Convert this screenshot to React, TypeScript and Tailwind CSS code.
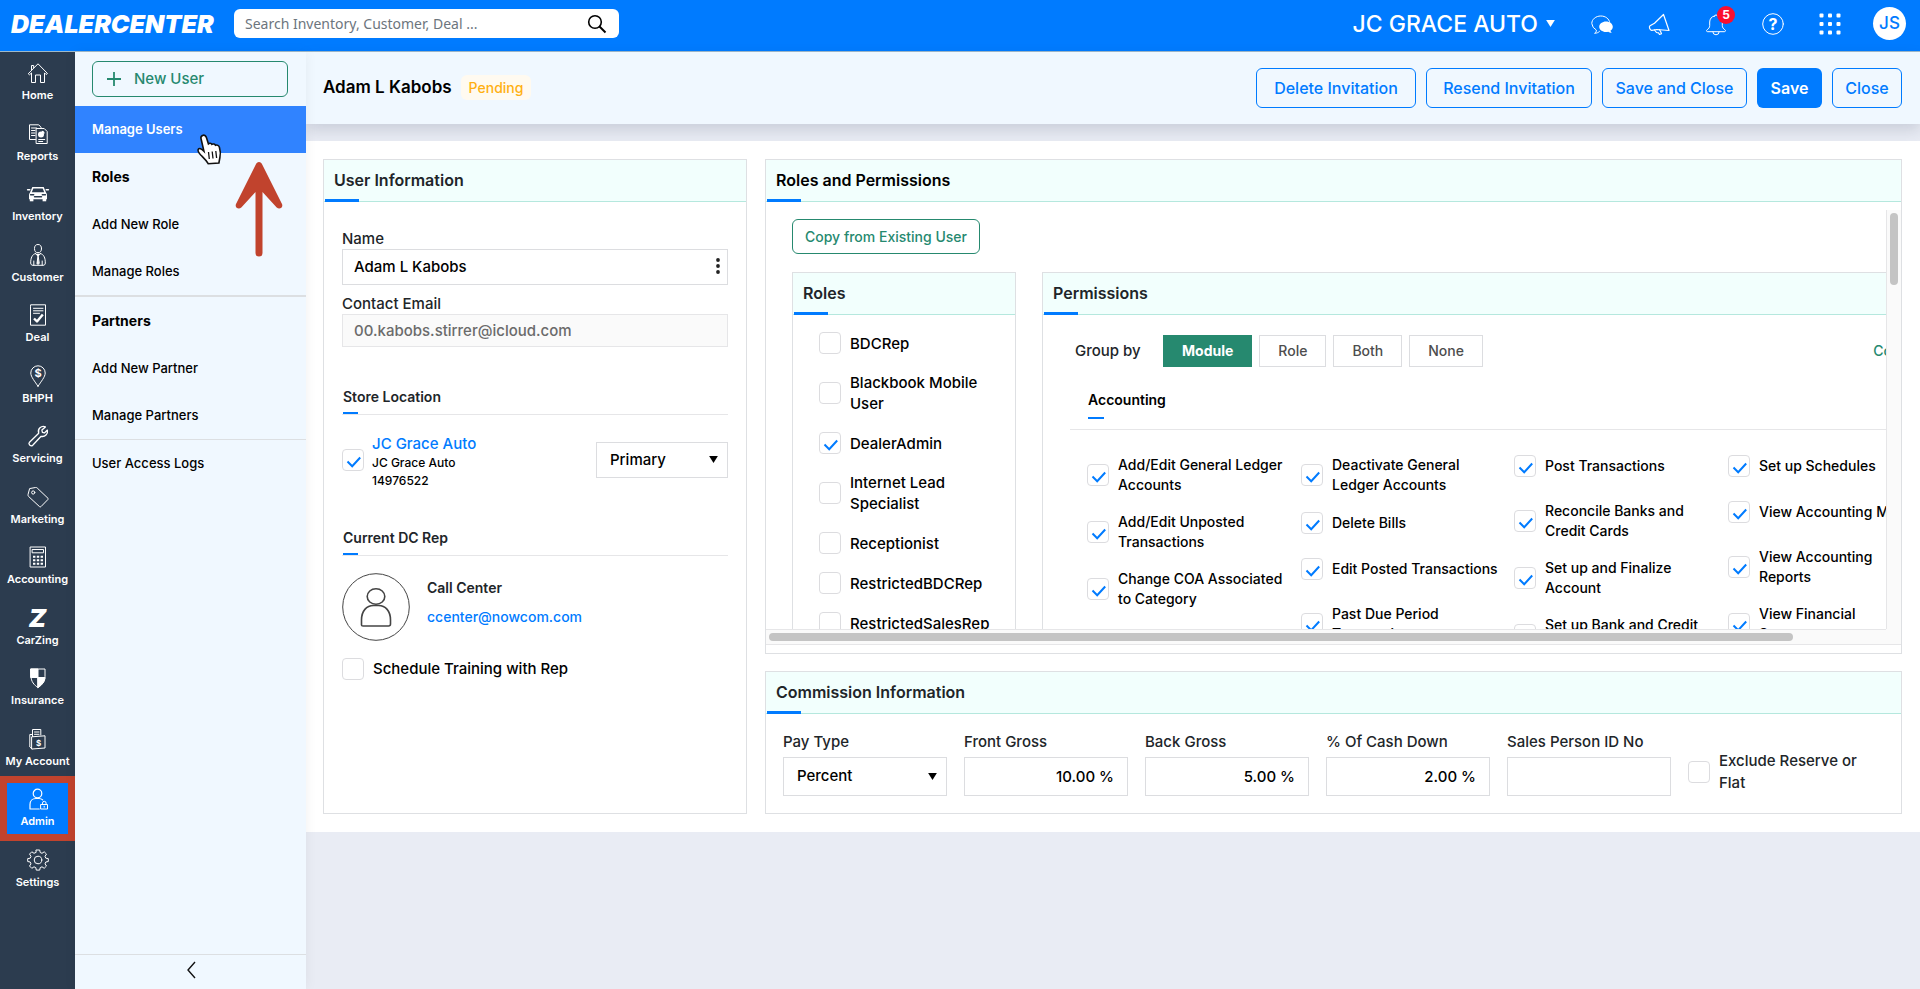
import { useId, useState } from 'react';
import type { ReactNode } from 'react';
import clsx from 'clsx';

// ---------- Icons ----------

function Icon({ children, size = 'h-[22px] w-[22px]' }: { children: ReactNode; size?: string }) {
  return (
    <svg
      viewBox="0 0 22 22"
      className={clsx(size, 'shrink-0 overflow-visible')}
      fill="none"
      stroke="currentColor"
      strokeWidth="1"
      strokeLinecap="round"
      strokeLinejoin="round"
      aria-hidden="true"
    >
      {children}
    </svg>
  );
}

const HomeIcon = () => (
  <Icon>
    <path d="M1.5 11.5 11 1.8l9.500 9.700-1.400 1-1.600-1.600V20.500h-4v-7.500h-5v7.500h-4V10.900l-1.600 1.600z" />
    <path d="M4.500 8V3.500h2.200v2.300" />
  </Icon>
);

const ReportsIcon = () => (
  <Icon>
    <path d="M8.500 16.500H2.500V1.800h9.200l2.300 2.400v.6" />
    <path d="M4.500 5h5M4.500 7.500h3.500M4.500 10h3.500M4.500 12.500h3.500" />
    <path d="M9.500 5.500h7.700l3 3V20.500H9.500z" />
    <circle cx="14" cy="11.500" r="3" fill="currentColor" stroke="none" />
    <path d="M14.800 7.700a3 3 0 0 1 2.900 2.900h-2.900z" fill="currentColor" stroke="none" />
    <path d="M11.700 16.500h6M11.700 18.500h4" />
  </Icon>
);

const InventoryIcon = () => (
  <Icon>
    <path d="M5.300 4h11.400l2.300 5.500 1 1.700v5H2v-5l1-1.700z" fill="currentColor" stroke="none" />
    <path d="M6.300 5.400h9.400l1.500 3.800H4.800z" fill="#2c3c4f" stroke="none" />
    <path d="M.6 6.800h2.200M19.200 6.800h2.200" strokeWidth="1.500" />
    <rect x="2.800" y="15.500" width="3.600" height="2.800" fill="currentColor" stroke="none" />
    <rect x="15.600" y="15.500" width="3.600" height="2.800" fill="currentColor" stroke="none" />
    <path d="M3.500 11.800h3.200M15.300 11.800h3.200M7.500 13.700h7" stroke="#2c3c4f" strokeWidth="1.400" />
  </Icon>
);

const CustomerIcon = () => (
  <Icon>
    <ellipse cx="11" cy="4.600" rx="3.500" ry="4.100" />
    <path d="M8.500 9.500C5 10.500 3.700 14 3.700 19c0 1.500.8 2.300 2.300 2.300h10c1.500 0 2.300-.8 2.300-2.300 0-5-1.300-8.500-4.800-9.500" />
    <path d="M8.500 9.800 11 12l2.500-2.200M11 12l-1 7.500 1 1 1-1z" fill="currentColor" />
    <path d="M6.800 17v4M15.200 17v4" />
  </Icon>
);

const DealIcon = () => (
  <Icon>
    <path d="M4 .8h14.500v20.400h-15V3.200z" />
    <path d="M6.500 4.300h9.500M6.500 6.800h9.500M6.500 9.300h6" />
    <path d="m7 14.500 3 3 5.800-7" strokeWidth="2.400" strokeLinecap="butt" />
  </Icon>
);

const BhphIcon = () => (
  <Icon>
    <path d="M11 21.300C8 16.500 3.800 12 3.800 8a7.200 7.200 0 0 1 14.400 0c0 4-4.200 8.500-7.200 13.300z" />
    <text x="11" y="12" textAnchor="middle" fontSize="11" fontWeight="700" fontFamily="Inter, sans-serif" fill="currentColor" stroke="none">$</text>
  </Icon>
);

const ServicingIcon = () => (
  <Icon>
    <path
      strokeWidth="1.300"
      d="M18.400 1.900a5 5 0 0 0-6.700 6.300l-9.200 9a2 2 0 0 0 0 2.600l.5.500a2 2 0 0 0 2.700-.1l8.400-8.900a5.200 5.200 0 0 0 6.300-6.200l-3 2.800-2-.6-.5-2.200z"
    />
  </Icon>
);

const MarketingIcon = () => (
  <Icon>
    <path d="M3 2.500 8.500 1.500a2 2 0 0 1 1.700.5L21 12.300a.8.800 0 0 1 0 1.100L14 20.600a1.100 1.100 0 0 1-1.500 0L1.500 10.400A2 2 0 0 1 1 8.800z" />
    <circle cx="6.200" cy="6.500" r="1.600" />
  </Icon>
);

const AccountingIcon = () => (
  <Icon>
    <path d="M3.500 1h15v20h-15z" />
    <path d="M5.500 3.500h11v3.300h-11z" />
    <path d="M6 9.800h2.400v2H6zM9.800 9.800h2.400v2H9.800zM13.600 9.800H16v2h-2.400zM6 13.300h2.400v2H6zM9.800 13.300h2.400v2H9.800zM13.600 13.300H16v2h-2.400zM6 16.800h2.400v2H6zM9.800 16.800h2.400v2H9.800zM13.600 16.800H16v2h-2.400z" fill="currentColor" stroke="none" />
  </Icon>
);

const CarZingIcon = () => (
  <Icon>
    <text x="10.500" y="20" textAnchor="middle" fontSize="25" fontWeight="900" fontStyle="italic" fontFamily="Inter, sans-serif" fill="currentColor" stroke="none">Z</text>
  </Icon>
);

const InsuranceIcon = () => (
  <Icon>
    <path d="M4 2h14v7.500c0 5-3.200 8.700-7 11-3.800-2.300-7-6-7-11z" />
    <path d="M4 2h7v8.500H4zM11 10.500h7c-.3 4.500-3.500 7.800-7 10z" fill="currentColor" />
  </Icon>
);

const MyAccountIcon = () => (
  <Icon>
    <path d="M5.500 8.500V1.500h8.300v5.500M7.500 4h4.500M7.500 6.300h4.500" />
    <path d="M5 21 18 20V7.800L5 8.800z M5 21l-2.200-2V6.500H5" />
    <text x="11.600" y="17.600" textAnchor="middle" fontSize="8" fontWeight="700" fontFamily="Inter, sans-serif" fill="currentColor" stroke="none">$</text>
  </Icon>
);

const AdminIcon = () => (
  <Icon>
    <circle cx="10.500" cy="5.500" r="4.300" strokeWidth="1.200" />
    <path d="M12.200 21H3V16.500c0-3.500 2.500-6 6-6h3c1.500 0 2.700.5 3.700 1.400" strokeWidth="1.200" />
    <path d="M14 16.500h6.500V21H14zM15.500 16.300v-1.200a1.800 1.800 0 0 1 3.600 0v1.200M17.200 18.200v1" />
  </Icon>
);

const SettingsIcon = () => (
  <Icon>
    <circle cx="11" cy="11" r="3.800" />
    <path d="M9.300 1h3.400l.5 2.500 1.800.8 2.200-1.500 2.300 2.300-1.500 2.200.8 1.900 2.500.4v2.900l-2.500.5-.8 1.900 1.500 2.100-2.300 2.300-2.200-1.500-1.800.8-.5 2.500H9.300l-.5-2.500-1.800-.8-2.200 1.500L2.500 17 4 14.900 3.200 13 .7 12.500V9.600l2.500-.4L4 7.300 2.500 5.100l2.300-2.300L7 4.300l1.800-.8z" />
  </Icon>
);

const ChatIcon = () => (
  <Icon>
    <path d="M4 20.200c1-.9 1.500-1.900 1.300-3.200A8.300 8.300 0 0 1 .8 10.500c0-4.200 4-7.500 9-7.500 4.600 0 8.400 2.700 8.900 6.500" />
    <path d="M4 20.200c2 0 3.500-.7 4.500-1.800" />
    <path d="M15 8.500c3.700 0 6.800 2.300 6.800 5.200 0 1.600-.9 3-2.300 3.900.1.900.5 1.600 1.300 2.200-1.500 0-2.600-.4-3.500-1.100-5 1.100-9.100-1.500-9.100-5 0-2.900 3.100-5.200 6.800-5.200z" fill="currentColor" stroke="none" />
  </Icon>
);

const MegaphoneIcon = () => (
  <Icon>
    <path d="M15.500 1.500 21 17.500 8.800 16.500l-5 .8C2 17.500.6 14 2 12.800l4.500-2.600z" strokeWidth="1.200" />
    <path d="m6.500 17 2 2.500 2 .3 1 1.700 2-.8-.8-2-1.200-2" strokeWidth="1.200" />
  </Icon>
);

const BellIcon = () => (
  <Icon>
    <path d="M9.500 3c-3 .5-4.800 3-4.800 6v3.500c0 2-1 3.200-2.500 4.200-1.200 1-.8 2 .5 2h16.600c1.300 0 1.700-1 .5-2-1.500-1-2.500-2.200-2.500-4.200V9c0-3-1.800-5.500-4.800-6a1.600 1.600 0 0 0-3 0z" />
    <path d="M7.800 18.800a3.200 3 0 0 0 6.400 0" />
  </Icon>
);

const HelpIcon = () => (
  <Icon>
    <circle cx="11" cy="11" r="10.300" />
    <text x="11" y="16.800" textAnchor="middle" fontSize="16" fontWeight="700" fontFamily="Inter, sans-serif" fill="currentColor" stroke="none">?</text>
  </Icon>
);

const GridIcon = () => (
  <Icon>
    <g fill="currentColor" stroke="none">
      {[0.500, 9, 17.500].map((y) =>
        [0.500, 9, 17.500].map((x) => <rect key={`${x}-${y}`} x={x} y={y} width="4" height="4" rx="1" />)
      )}
    </g>
  </Icon>
);

const SearchIcon = () => (
  <svg viewBox="0 0 20 20" className="h-5 w-5" fill="none" stroke="#000" strokeWidth="1.600" aria-hidden="true">
    <circle cx="8" cy="8" r="6.300" />
    <path d="m12.500 12.500 6 6" strokeWidth="2" />
  </svg>
);

const Caret = ({ className }: { className?: string }) => (
  <svg viewBox="0 0 10 8" className={clsx('h-[7px] w-[9px] shrink-0', className)} fill="currentColor" aria-hidden="true">
    <path d="M0 0h10L5 8z" />
  </svg>
);

// ---------- Data ----------

const navItems = [
  { label: 'Home', icon: HomeIcon },
  { label: 'Reports', icon: ReportsIcon },
  { label: 'Inventory', icon: InventoryIcon },
  { label: 'Customer', icon: CustomerIcon },
  { label: 'Deal', icon: DealIcon },
  { label: 'BHPH', icon: BhphIcon },
  { label: 'Servicing', icon: ServicingIcon },
  { label: 'Marketing', icon: MarketingIcon },
  { label: 'Accounting', icon: AccountingIcon },
  { label: 'CarZing', icon: CarZingIcon },
  { label: 'Insurance', icon: InsuranceIcon },
  { label: 'My Account', icon: MyAccountIcon },
  { label: 'Admin', icon: AdminIcon },
  { label: 'Settings', icon: SettingsIcon },
];

const roles = [
  { label: 'BDCRep' },
  { label: 'Blackbook Mobile User' },
  { label: 'DealerAdmin', checked: true },
  { label: 'Internet Lead Specialist' },
  { label: 'Receptionist' },
  { label: 'RestrictedBDCRep' },
  { label: 'RestrictedSalesRep' },
];

const permissionColumns = [
  ['Add/Edit General Ledger Accounts', 'Add/Edit Unposted Transactions', 'Change COA Associated to Category'],
  ['Deactivate General Ledger Accounts', 'Delete Bills', 'Edit Posted Transactions', 'Past Due Period Transactions'],
  ['Post Transactions', 'Reconcile Banks and Credit Cards', 'Set up and Finalize Account', 'Set up Bank and Credit Cards'],
  ['Set up Schedules', 'View Accounting Menu', 'View Accounting Reports', 'View Financial Statements'],
];

const amounts = [
  { label: 'Front Gross', value: '10.00 %' },
  { label: 'Back Gross', value: '5.00 %' },
  { label: '% Of Cash Down', value: '2.00 %' },
  { label: 'Sales Person ID No', value: '' },
];

// ---------- Shared pieces ----------

function Checkbox({ id, defaultChecked }: { id: string; defaultChecked?: boolean }) {
  return (
    <span className="grid h-[22px] w-[22px] shrink-0">
      <input
        id={id}
        type="checkbox"
        defaultChecked={defaultChecked}
        className="peer col-start-1 row-start-1 h-[22px] w-[22px] appearance-none rounded border border-[#dcdcdf] bg-white"
      />
      <svg
        viewBox="0 0 22 22"
        className="pointer-events-none invisible col-start-1 row-start-1 peer-checked:visible"
        fill="none"
        stroke="#007bff"
        strokeWidth="2"
        aria-hidden="true"
      >
        <path d="m5.500 12.500 4.700 4.700 8-8.700" />
      </svg>
    </span>
  );
}

function CheckRow({ label, checked, textClass }: { label: string; checked?: boolean; textClass: string }) {
  const id = useId();
  return (
    <div className="flex items-center gap-[9px]">
      <Checkbox id={id} defaultChecked={checked} />
      <label htmlFor={id} className={textClass}>
        {label}
      </label>
    </div>
  );
}

function Card({ title, dark, className, children }: { title: string; dark?: boolean; className?: string; children: ReactNode }) {
  return (
    <section className={clsx('flex flex-col border border-[#dee0e3] bg-white', className)}>
      <header className="relative flex h-[42px] shrink-0 items-center border-b border-[#b5e8de] bg-[#f2fffd] px-[10px] pb-[2px]">
        <h2 className={clsx('text-base font-semibold', dark ? 'text-black' : 'text-[#212529]')}>{title}</h2>
        <span className="absolute -bottom-px left-px h-[3px] w-[34px] bg-[#007bff]" />
      </header>
      {children}
    </section>
  );
}

function SubHeading({ children }: { children: ReactNode }) {
  return (
    <h3 className="relative border-b border-[#e6e6e8] pb-[7px] pl-px text-sm leading-5 font-semibold text-[#212529]">
      {children}
      <span className="absolute bottom-0 left-px h-[2px] w-[15px] bg-[#007bff]" />
    </h3>
  );
}

function SelectBox({ id, options, className, label }: { id?: string; options: string[]; className?: string; label?: string }) {
  return (
    <div className={clsx('relative text-[15px] font-medium text-black', className)}>
      <select id={id} aria-label={label} className="h-full w-full appearance-none border border-[#dcdde0] bg-white pr-8 pl-[13px]">
        {options.map((o) => (
          <option key={o}>{o}</option>
        ))}
      </select>
      <Caret className="pointer-events-none absolute top-1/2 right-[10px] -mt-1" />
    </div>
  );
}

function OutlineButton({ children, width }: { children: ReactNode; width: string }) {
  return (
    <button className={clsx('h-10 rounded-md border border-[#007bff] text-base font-medium whitespace-nowrap text-[#007bff]', width)}>
      {children}
    </button>
  );
}

// ---------- Page sections ----------

function TopBar() {
  return (
    <header className="flex h-[52px] shrink-0 items-center border-b border-[#9fb9c9] bg-[#007bff] pr-[14px] pb-1 pl-[11px] text-white">
      <a href="#home" className="w-[223px] text-[25px] leading-6 font-black italic">
        DEALERCENTER
      </a>
      <form className="flex h-[29px] w-[385px] items-center rounded-md bg-white pr-3 pl-[11px]" role="search">
        <input
          aria-label="Search"
          placeholder="Search Inventory, Customer, Deal ..."
          className="min-w-0 flex-1 bg-transparent font-['Noto_Sans',sans-serif] text-sm text-black outline-none placeholder:text-[#6c757d]"
        />
        <button type="button" aria-label="Search">
          <SearchIcon />
        </button>
      </form>
      <button className="ml-auto flex items-center gap-2 text-[23px] leading-7 font-medium">
        JC GRACE AUTO
        <Caret />
      </button>
      <div className="ml-9 flex items-center gap-[35px]">
        <button aria-label="Chat"><ChatIcon /></button>
        <button aria-label="Announcements"><MegaphoneIcon /></button>
        <button aria-label="Notifications" className="relative">
          <BellIcon />
          <span className="absolute -top-[7px] -right-[8px] flex h-[18px] w-[18px] items-center justify-center rounded-full bg-[#fb0f2f] text-xs font-bold">
            5
          </span>
        </button>
        <button aria-label="Help"><HelpIcon /></button>
        <button aria-label="Apps"><GridIcon /></button>
      </div>
      <button className="ml-8 flex h-[33px] w-[33px] items-center justify-center rounded-full bg-white text-[17px] font-medium text-[#007bff]">
        JS
      </button>
    </header>
  );
}

function NavRail() {
  return (
    <nav className="w-[75px] shrink-0 bg-[#2c3c4f] text-white">
      <ul className="flex h-[847px] flex-col">
        {navItems.map(({ label, icon: ItemIcon }) => (
          <li key={label} className="relative flex-1">
            <a
              href={`#${label}`}
              className={clsx('flex h-full flex-col items-center gap-px pt-[10px] text-[11px] leading-5 font-semibold', label === 'Admin' && 'bg-[#007bff]')}
            >
              <ItemIcon />
              <span className="whitespace-nowrap">{label}</span>
            </a>
            {label === 'Admin' && (
              <span className="pointer-events-none absolute -inset-y-[2px] right-0 left-0 border-[7px] border-[#c1432d]" />
            )}
          </li>
        ))}
      </ul>
    </nav>
  );
}

function SubLink({ children, bold }: { children: ReactNode; bold?: boolean }) {
  return bold ? (
    <h2 className="flex h-12 items-center px-[17px] text-sm font-bold text-black">{children}</h2>
  ) : (
    <a href="#section" className="flex h-[47px] items-center px-[17px] text-[13px] font-medium text-black">
      {children}
    </a>
  );
}

function SubMenu() {
  return (
    <aside className="relative z-10 flex w-[231px] shrink-0 flex-col bg-[#f0f8ff] shadow-[0_0_12px_rgba(0,0,0,0.06)]">
      <div className="px-[17px] pt-[9px] pb-[9px]">
        <button className="flex h-9 w-[196px] items-center gap-[13px] rounded-md border border-[#26896f] pl-[14px] text-[15px] font-medium text-[#26896f]">
          <svg viewBox="0 0 14 14" className="h-[14px] w-[14px]" stroke="currentColor" strokeWidth="1.800" aria-hidden="true">
            <path d="M7 0v14M0 7h14" />
          </svg>
          New User
        </button>
      </div>
      <a href="#users" className="flex h-[47px] items-center bg-[#3083ff] px-[17px] text-[13px] font-semibold text-white">
        Manage Users
      </a>
      <div className="border-b-2 border-[#dcdfe2]">
        <SubLink bold>Roles</SubLink>
        <SubLink>Add New Role</SubLink>
        <SubLink>Manage Roles</SubLink>
      </div>
      <div className="border-b border-[#dcdfe2]">
        <SubLink bold>Partners</SubLink>
        <SubLink>Add New Partner</SubLink>
        <SubLink>Manage Partners</SubLink>
      </div>
      <SubLink>User Access Logs</SubLink>
      <button aria-label="Collapse menu" className="mt-auto flex h-[35px] items-center justify-center border-t border-[#dcdfe2] pb-1">
        <svg viewBox="0 0 10 18" className="h-[18px] w-[10px]" fill="none" stroke="#111" strokeWidth="1.400" aria-hidden="true">
          <path d="M9 1 2 9l7 8" />
        </svg>
      </button>

      {/* pointer and callout arrow */}
      <svg viewBox="0 0 28 32" className="pointer-events-none absolute top-[81px] left-[120px] h-8 w-7" aria-hidden="true">
        <path
          d="M7.500 2.500c1.800-1 3.300.2 3.900 2l2 6.300c1-.9 2.800-.7 3.500.5 1.200-.7 2.900-.3 3.600 1 1.600-.7 3.400.3 3.900 2 1 3.200 1.400 6.700.5 10.200l-1 5.500-10.700.7c-1.800-3.300-4-5.200-7.200-8.400-1.500-1.600-3.400-4.500-2.800-5.900 1-1.800 3.300-.8 5.700 1.700L6 5.500c-.4-1.300.4-2.400 1.500-3z"
          fill="#fff"
          stroke="#111"
          strokeWidth="1.600"
        />
        <path d="m13.500 19 .8 7M17.200 18.500l.8 7M20.800 18l.8 7" stroke="#111" strokeWidth="1.300" />
      </svg>
      <svg viewBox="0 0 48 96" className="pointer-events-none absolute top-[109px] left-[160px] h-24 w-12" aria-hidden="true">
        <path
          d="M24 1c1.500 0 2.600 1 3.200 2.500L47 43c1.500 3.500-2.500 6-5.300 3.500L27.500 31v61a3.500 3.500 0 0 1-7 0V31L6.300 46.500C3.500 49-.5 46.500 1 43L20.800 3.500C21.400 2 22.500 1 24 1z"
          fill="#c1432d"
        />
      </svg>
    </aside>
  );
}

function UserInformation() {
  return (
    <Card title="User Information" className="w-[424px] shrink-0">
      <div className="flex flex-col px-[18px] pt-[27px]">
        <label htmlFor="name" className="text-[15px] leading-5 font-medium text-[#212529]">Name</label>
        <div className="relative">
          <input
            id="name"
            defaultValue="Adam L Kabobs"
            className="h-9 w-full border border-[#dcdde0] px-[11px] pb-px text-[15px] font-medium text-black"
          />
          <button aria-label="Name options" className="absolute top-[9px] right-2 h-4 w-1">
            <svg viewBox="0 0 4 16" className="h-4 w-1" fill="#222" aria-hidden="true">
              <circle cx="2" cy="2" r="1.900" />
              <circle cx="2" cy="8" r="1.900" />
              <circle cx="2" cy="14" r="1.900" />
            </svg>
          </button>
        </div>
        <label htmlFor="email" className="mt-[9px] text-[15px] leading-5 font-medium text-[#212529]">Contact Email</label>
        <input
          id="email"
          defaultValue="00.kabobs.stirrer@icloud.com"
          readOnly
          className="h-[33px] w-full border border-[#e6e6e8] bg-[#fafafa] px-[11px] text-[15px] font-medium text-[#6b6b6b]"
        />

        <div className="mt-10">
          <SubHeading>Store Location</SubHeading>
        </div>
        <div className="mt-[17px] flex h-[56px] items-center">
          <Checkbox id="store" defaultChecked />
          <div className="ml-2 flex flex-1 flex-col pt-1 font-medium">
            <a href="#store-detail" className="text-[15px] leading-5 text-[#007bff]">JC Grace Auto</a>
            <label htmlFor="store" className="text-xs leading-[18px] text-black">
              JC Grace Auto
              <br />
              14976522
            </label>
          </div>
          <SelectBox label="Store type" options={['Primary', 'Secondary']} className="h-9 w-[132px]" />
        </div>

        <div className="mt-10">
          <SubHeading>Current DC Rep</SubHeading>
        </div>
        <div className="mt-[17px] flex items-center gap-[17px]">
          <svg viewBox="0 0 68 68" className="h-[68px] w-[68px]" fill="none" stroke="#444" aria-hidden="true">
            <circle cx="34" cy="34" r="33.300" />
            <ellipse cx="34" cy="23.500" rx="8.800" ry="7.800" strokeWidth="1.600" />
            <path d="M19.500 52V47c0-9 5-14.500 12-14.500h5c7 0 12 5.500 12 14.500v4c0 1.500-.5 2-2 2H21c-1 0-1.500 0-1.500-1z" strokeWidth="1.600" />
          </svg>
          <div className="flex flex-col gap-[9px] pb-[10px]">
            <p className="text-sm leading-5 font-semibold text-[#212529]">Call Center</p>
            <a href="mailto:ccenter@nowcom.com" className="text-sm leading-5 font-medium text-[#007bff]">ccenter@nowcom.com</a>
          </div>
        </div>
        <div className="mt-[17px]">
          <CheckRow label="Schedule Training with Rep" textClass="text-[15px] leading-5 font-medium text-black" />
        </div>
      </div>
    </Card>
  );
}

function RolesAndPermissions() {
  const [groupBy, setGroupBy] = useState('Module');

  return (
    <Card title="Roles and Permissions" dark className="pb-2">
      <div className="mt-2 grid h-[435px] grid-cols-[minmax(0,1fr)_15px] grid-rows-[minmax(0,1fr)_15px] border-b border-[#e6e6e8]">
        <div className="overflow-hidden">
          <div className="w-[1222px] px-[26px] pt-[9px]">
            <button className="h-[35px] rounded-md border border-[#26896f] px-3 text-sm font-medium text-[#26896f]">
              Copy from Existing User
            </button>
            <div className="mt-[18px] flex items-start gap-[26px]">
              <Card title="Roles" className="w-[224px] shrink-0">
                <div className="flex flex-col gap-[18px] py-[17px] pr-2 pl-[26px]">
                  {roles.map((r) => (
                    <CheckRow key={r.label} label={r.label} checked={r.checked} textClass="max-w-[140px] text-[15px] leading-[21px] font-medium text-black" />
                  ))}
                </div>
              </Card>

              <Card title="Permissions" className="flex-1">
                <div className="flex items-center pt-5 pr-[9px] pl-8">
                  <span className="w-[88px] text-[15px] font-medium text-[#212529]">Group by</span>
                  <div className="flex gap-[7px] text-sm">
                    {['Module', 'Role', 'Both', 'None'].map((g) => (
                      <button
                        key={g}
                        onClick={() => setGroupBy(g)}
                        className={clsx(
                          'h-8 border px-[18px] pb-px',
                          g === groupBy
                            ? 'border-[#26896f] bg-[#26896f] font-bold text-white'
                            : 'border-[#dcdde0] bg-white font-medium text-[#4d4d4d]'
                        )}
                      >
                        {g}
                      </button>
                    ))}
                  </div>
                  <button className="ml-auto text-sm font-medium whitespace-nowrap text-[#26896f]">Collapse All</button>
                </div>
                <div className="ml-[27px] border-b border-[#e6e6e8] pt-[23px] pb-[10px] pl-[18px]">
                  <h3 className="text-sm leading-5 font-semibold text-black">Accounting</h3>
                  <span className="mt-[7px] block h-[2px] w-4 bg-[#007bff]" />
                </div>
                <div className="grid grid-cols-[214px_213px_214px_214px] pt-[25px] pb-8 pl-11">
                  {permissionColumns.map((col, i) => (
                    <div key={col[0]} className="flex flex-col gap-[17px]">
                      {col.map((p) => (
                        <div key={p} className="min-h-[29px]">
                          <CheckRow
                            label={p}
                            checked={p !== 'Set up Bank and Credit Cards'}
                            textClass={clsx(
                              'text-sm leading-5 font-medium text-black',
                              p === 'View Accounting Menu' ? 'whitespace-nowrap' : i === 3 ? 'max-w-[150px]' : 'max-w-[170px]'
                            )}
                          />
                        </div>
                      ))}
                    </div>
                  ))}
                </div>
              </Card>
            </div>
          </div>
        </div>
        <div className="border-l border-[#e6e6e8] bg-[#fafafa] pt-[3px] pl-[3px]">
          <div className="h-[72px] w-2 rounded-full bg-[#c4c4c4]" />
        </div>
        <div className="border-t border-[#e6e6e8] bg-[#fafafa] pt-[3px] pl-[3px]">
          <div className="h-2 w-11/12 rounded-full bg-[#c4c4c4]" />
        </div>
        <div className="bg-[#fafafa]" />
      </div>
    </Card>
  );
}

function CommissionInformation() {
  return (
    <Card title="Commission Information">
      <div className="flex gap-[17px] px-[17px] pt-[18px] pb-[17px]">
        <div className="flex w-[164px] flex-col gap-[5px]">
          <label htmlFor="pay-type" className="text-[15px] leading-5 font-medium text-[#212529]">Pay Type</label>
          <SelectBox id="pay-type" options={['Percent', 'Flat']} className="h-[39px]" />
        </div>
        {amounts.map((a) => (
          <div key={a.label} className="flex w-[164px] flex-col gap-[5px]">
            <label htmlFor={a.label} className="text-[15px] leading-5 font-medium text-[#212529]">{a.label}</label>
            <input
              id={a.label}
              defaultValue={a.value}
              className="h-[39px] w-full border border-[#dcdde0] px-[13px] text-right text-[15px] font-medium text-black"
            />
          </div>
        ))}
        <div className="pt-[18px]">
          <CheckRow label="Exclude Reserve or Flat" textClass="max-w-[150px] text-[15px] leading-[22px] font-medium text-[#212529]" />
        </div>
      </div>
    </Card>
  );
}

export default function App() {
  return (
    <div className="flex h-screen flex-col overflow-hidden bg-[#e9ecf4] font-['Inter',sans-serif]">
      <TopBar />
      <div className="flex min-h-0 flex-1">
        <NavRail />
        <SubMenu />
        <main className="min-w-0 flex-1">
          <div className="flex h-[72px] items-center bg-[#f0f8ff] pr-[18px] pb-px pl-[17px] shadow-[0_6px_14px_rgba(40,50,80,0.16)]">
            <h1 className="text-[17px] font-semibold text-black">Adam L Kabobs</h1>
            <span className="ml-[9px] rounded-md bg-[#fffaf0] px-2 text-sm leading-[25px] font-medium text-[#ffb012]">Pending</span>
            <div className="ml-auto flex gap-[10px]">
              <OutlineButton width="w-40">Delete Invitation</OutlineButton>
              <OutlineButton width="w-[166px]">Resend Invitation</OutlineButton>
              <OutlineButton width="w-[145px]">Save and Close</OutlineButton>
              <button className="h-10 w-[65px] rounded-md bg-[#007bff] text-base font-semibold text-white">Save</button>
              <OutlineButton width="w-[70px]">Close</OutlineButton>
            </div>
          </div>
          <div className="mt-[17px] flex gap-[18px] bg-white px-[17px] py-[18px] pr-[18px]">
            <UserInformation />
            <div className="flex min-w-0 flex-1 flex-col gap-[17px]">
              <RolesAndPermissions />
              <CommissionInformation />
            </div>
          </div>
        </main>
      </div>
    </div>
  );
}
